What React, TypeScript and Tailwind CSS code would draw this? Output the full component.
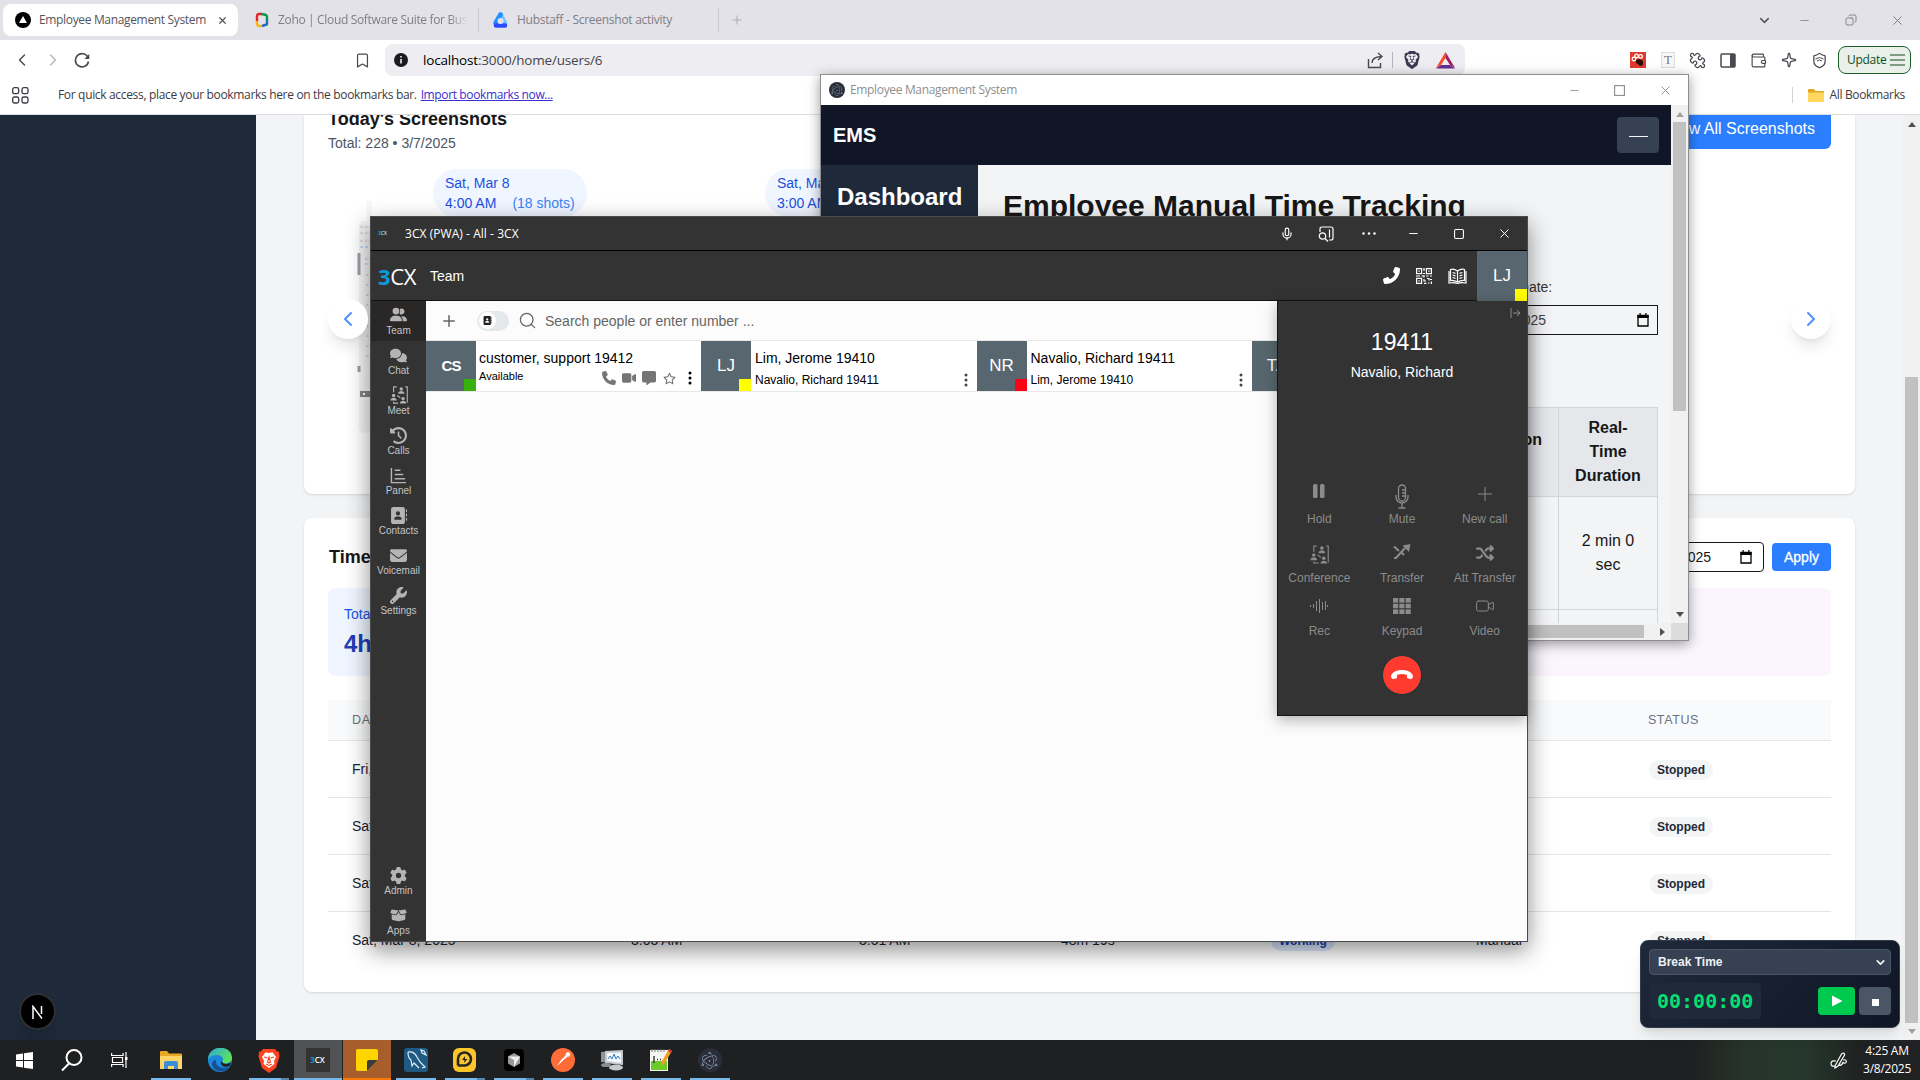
import React from "react";
import {
  Bookmark, ChevronDown, ChevronLeft, ChevronRight, Mic, Minus, Plus, Puzzle, Search, Sparkle, Wallet, X, Shield, Copy, Video,
} from "lucide-react";
import {
  FaUserGroup, FaComments, FaClockRotateLeft, FaAddressBook, FaEnvelope, FaWrench, FaGear, FaBoxOpen, FaPhone, FaVideo, FaMessage, FaRegStar, FaShuffle,
} from "react-icons/fa6";
import { SiBrave, SiElectron } from "react-icons/si";

const segoe = "font-['Open_Sans','Noto_Sans',sans-serif]";
const arial = "font-['Liberation_Sans',Arial,sans-serif]";

/* ---------- small drawings ---------- */

function MeetIcon({ size = 20 }: { size?: number }) {
  return (
    <svg width={size} height={size} viewBox="0 0 20 20" fill="currentColor">
      <circle cx="12.500" cy="3.200" r="1.900" />
      <path d="M9 8.600c0-4 7-4 7 0z" />
      <circle cx="4" cy="10.500" r="1.900" />
      <path d="M.5 16c0-4 7-4 7 0z" />
      <circle cx="14.500" cy="14" r="1.900" />
      <path d="M11 19.500c0-4 7-4 7 0z" />
      <path d="M7.500 1H4v6M17 1h2.200v17.500M4 17.500V19h5M8 10.500l3.500 2.500" fill="none" stroke="currentColor" strokeWidth="1.200" />
    </svg>
  );
}

function PanelIcon() {
  return (
    <svg width="17" height="17" viewBox="0 0 18 18" fill="none" stroke="currentColor" strokeWidth="1.500">
      <path d="M1.500 1v15.500H17M5 3.500h6M5 8h9M5 12.500h11" />
    </svg>
  );
}

function QrIcon() {
  return (
    <svg width="16" height="16" viewBox="0 0 16 16" fill="none" stroke="currentColor" strokeWidth="1.200">
      <path d="M.6.6h5v5h-5zM10.400.6h5v5h-5zM.6 10.400h5v5h-5z" />
      <path d="M2.400 3.100h1.400M12.200 3.100h1.400M2.400 12.900h1.400M8 0v3M7 5.500h2M8 7v2.500M0 8h4M5.500 8h2M10 8h2.500M14 8h2M8 11v2h2M8 15.400h2.500M11 10.500h2v2M14 11.500h2M12 15h1.500M15.400 13.500V16" />
    </svg>
  );
}

function Dots({ className = "" }: { className?: string }) {
  return (
    <svg width="4" height="14" viewBox="0 0 4 14" className={className} fill="currentColor">
      <circle cx="2" cy="2" r="1.500" /><circle cx="2" cy="7" r="1.500" /><circle cx="2" cy="12" r="1.500" />
    </svg>
  );
}

function Calendar() {
  return (
    <svg width="12" height="14" viewBox="0 0 12 14" className="text-black">
      <path d="M1 2.500h10v10.500H1z" fill="none" stroke="currentColor" strokeWidth="1.300" />
      <path d="M.4 2h11.200v3H.4zM2.500 0h1.200v2H2.500zM8.300 0h1.200v2H8.300z" fill="currentColor" />
    </svg>
  );
}

function Logo({ className = "" }: { className?: string }) {
  return (
    <span className={`flex items-center leading-none font-['Open_Sans',sans-serif] ${className}`}>
      <span className="font-bold text-[#0a9bdc]">3</span>
      <span className="text-white">CX</span>
    </span>
  );
}

function Arrow({ d, className = "" }: { d: string; className?: string }) {
  return (
    <svg width="8" height="5" viewBox="0 0 8 5" className={className}><path d={d} fill="currentColor" /></svg>
  );
}
const UP = "M0 5L4 0L8 5z";
const DOWN = "M0 0L4 5L8 0z";

/* ---------- browser ---------- */

function TabStrip() {
  return (
    <div className="flex h-10 items-center bg-[#e3e2e8] pl-[3px] text-[12px] text-[#7f7e85]">
      <div className="flex h-8 w-[235px] items-center rounded-lg bg-white pl-3 text-[#55545b]">
        <svg width="16" height="16" viewBox="0 0 16 16"><circle cx="8" cy="8" r="8" /><path d="M8 4l4 7H4z" fill="#fff" /></svg>
        <span className="ml-2 w-[167px] whitespace-nowrap tracking-[-0.34px]">Employee Management System</span>
        <X size={11} strokeWidth={2.600} className="ml-[11px]" />
      </div>
      <div className="flex h-6 w-[241px] items-center border-r border-[#c9c8ce] pl-4">
        <svg width="16" height="16" viewBox="0 0 16 16" fill="none" strokeWidth="2.400">
          <path d="M3 9V4q0-2 2-2h3" stroke="#e42527" /><path d="M8 2l4 1q1 .5 1 2v3" stroke="#089949" />
          <path d="M13 8v3q0 2-2 2l-3 1" stroke="#226db4" /><path d="M8 14H5q-2 0-2-2V9" stroke="#f9b21d" />
        </svg>
        <span className="ml-2 w-[190px] overflow-hidden whitespace-nowrap tracking-[-0.34px]" style={{ maskImage: "linear-gradient(90deg,#000 90%,transparent)" }}>
          Zoho | Cloud Software Suite for Business
        </span>
      </div>
      <div className="flex h-6 w-[240px] items-center border-r border-[#c9c8ce] pl-[13px]">
        <svg width="17" height="17" viewBox="0 0 17 17">
          <path d="M8.500 2.500L13 11" stroke="#6cc4ff" strokeWidth="4.500" strokeLinecap="round" fill="none" />
          <path d="M8.500 2.500L3.500 11" stroke="#1e90ff" strokeWidth="4.500" strokeLinecap="round" fill="none" />
          <path d="M4 13.500h9" stroke="#2b4bff" strokeWidth="4.500" strokeLinecap="round" /><circle cx="8.500" cy="9" r="3" fill="#e3e2e8" />
        </svg>
        <span className="ml-[8px] whitespace-nowrap tracking-[-0.27px]">Hubstaff - Screenshot activity</span>
      </div>
      <Plus size={14} strokeWidth={1.600} className="ml-[11px] text-[#aaa9af]" />
      <div className="ml-auto flex items-center pr-[15px] text-[#77767c]">
        <ChevronDown size={15} strokeWidth={2.400} className="text-[#55545b]" />
        <Minus size={13} strokeWidth={1.300} className="ml-[26px]" />
        <Copy size={12} strokeWidth={1.700} className="ml-[34px] -scale-x-100" />
        <X size={15} strokeWidth={1.500} className="ml-[33px]" />
      </div>
    </div>
  );
}

function Toolbar() {
  return (
    <div className="flex h-10 items-center bg-white text-[#4a4952]">
      <ChevronLeft size={20} strokeWidth={1.700} className="ml-[12px]" />
      <ChevronRight size={20} strokeWidth={1.500} className="ml-[11px] text-[#b3b2b8]" />
      <svg width="16" height="16" viewBox="0 0 16 16" className="ml-[11px]" fill="none" stroke="currentColor" strokeWidth="1.600"><path d="M14 5.500A6.600 6.600 0 1 0 14.500 9.500" /><path d="M15.300 2v5h-5z" fill="currentColor" stroke="none" /></svg>
      <Bookmark size={17} strokeWidth={1.700} className="ml-[264px]" />
      <div className="ml-[14px] flex h-8 w-[1080px] items-center rounded-lg bg-[#ededf2] pl-[9px]">
        <svg width="14" height="14" viewBox="0 0 14 14"><circle cx="7" cy="7" r="7" fill="#1c1b22" /><path d="M7 6v4.500M7 3v1.600" stroke="#fff" strokeWidth="1.500" /></svg>
        <span className="ml-[15px] text-[13.500px] tracking-[-0.18px] text-[#45444c]"><span className="text-black">localhost</span>:3000/home/users/6</span>
        <div className="ml-auto flex items-center pr-[10px]">
          <svg width="17" height="17" viewBox="0 0 17 17" fill="none" stroke="currentColor" strokeWidth="1.400"><path d="M1.500 7v8.500h12V11M5 11q0-6 9-6.500M11 1l4 3.500L11 8" /></svg>
          <span className="mx-[8px] h-4 w-px bg-[#b5b4bb]" />
          <SiBrave size={18} className="ml-[2px] text-[#3b3b52]" />
          <svg width="19" height="17" viewBox="0 0 19 17" className="ml-[15px]">
            <path d="M9.500 0L0 16l5-3 4.500-7z" fill="#ff4724" /><path d="M9.500 0L19 16l-5-3-4.500-7z" fill="#9e1f63" /><path d="M0 16.500h19l-5-3.500H5z" fill="#662d91" />
          </svg>
        </div>
      </div>
      <div className="ml-auto flex items-center pr-[9px]">
        <div className="flex size-4 items-center justify-center bg-[#dd3b2f]"><svg width="14" height="14" viewBox="0 0 14 14"><g fill="none" stroke="#fff" strokeWidth="1.300"><circle cx="3" cy="6" r="1.800" /><circle cx="5.500" cy="3" r="1.800" /><circle cx="9.500" cy="3.500" r="1.800" /></g><path d="M5 7l4-1 3 2v4l-3 1-2-2-2-1z" fill="#2b0a08" /></svg></div>
        <div className="ml-[15px] flex h-4 w-[14px] items-center justify-center border border-[#ddd] bg-[#f7f7f7] font-['Liberation_Serif',serif] text-[13px] text-[#777]">T</div>
        <Puzzle size={17} strokeWidth={1.800} className="ml-[14px] -scale-x-100" />
        <svg width="16" height="15" viewBox="0 0 16 15" className="ml-[14px]"><rect x="1" y="1" width="14" height="13" rx="1" fill="none" stroke="currentColor" strokeWidth="1.500" /><path d="M10 1h5v13h-5z" fill="currentColor" /></svg>
        <Wallet size={17} strokeWidth={1.600} className="ml-[14px]" />
        <Sparkle size={16} strokeWidth={1.900} className="ml-[14px]" />
        <div className="ml-[14px] flex size-[17px] items-center justify-center">
          <Shield size={17} strokeWidth={1.800} className="absolute" />
          <svg width="9" height="6" viewBox="0 0 9 6" className="relative" fill="none" stroke="currentColor"><path d="M.5 2q4-3 8 0M2 4q2.500-2 5 0" /></svg>
        </div>
        <div className="ml-[10px] flex h-7 w-[73px] items-center rounded-lg border border-[#1b5e28] bg-[#e9f0e9] pl-2 text-[12px] text-[#0e4d1c]">
          <span className="tracking-[-0.3px]">Update</span>
          <svg width="15" height="12" viewBox="0 0 15 12" className="ml-[4px]" stroke="currentColor" strokeWidth="1.200"><path d="M0 1h15M0 6h15M0 11h15" /></svg>
        </div>
      </div>
    </div>
  );
}

function BookmarksBar() {
  return (
    <div className="flex h-[35px] items-center border-b border-[#dedde2] bg-white pb-[4px] pl-[12px] text-[12px] text-[#3c3b42]">
      <svg width="17" height="17" viewBox="0 0 17 17" fill="none" stroke="currentColor" strokeWidth="1.300">
        <rect x=".7" y=".7" width="6" height="6" rx="1.800" /><rect x="10" y=".7" width="6" height="6" rx="1.800" /><rect x=".7" y="10" width="6" height="6" rx="1.800" /><rect x="10" y="10" width="6" height="6" rx="1.800" />
      </svg>
      <span className="ml-[29px] tracking-[-0.33px]">For quick access, place your bookmarks here on the bookmarks bar.</span>
      <span className="ml-[4px] tracking-[-0.37px] text-[#3a2fd0] underline">Import bookmarks now...</span>
      <div className="ml-auto flex items-center pr-[15px]">
        <span className="mr-[15px] h-4 w-px bg-[#d3d2d8]" />
        <svg width="16" height="13" viewBox="0 0 16 13"><path d="M0 1q0-1 1-1h5l1.500 2H16v11H0z" fill="#e0a826" /><path d="M0 3.500h16V13H0z" fill="#ffd75e" /></svg>
        <span className="ml-[6px] tracking-[-0.35px]">All Bookmarks</span>
      </div>
    </div>
  );
}

/* ---------- page in the browser ---------- */

const days = ["Fri, Mar 7, 2025", "Sat, Mar 8, 2025", "Sat, Mar 8, 2025", "Sat, Mar 8, 2025"];

function ShotPill({ time, count }: { time: string; count: string }) {
  return (
    <div className="h-[48px] w-[154px] rounded-full bg-[#eff6ff] px-3 pt-[4px] text-[14px] leading-5 text-[#1c4fe0]">
      <div>Sat, Mar 8</div>
      <div className="whitespace-pre">{time}<span className="ml-4 text-[#3b82f6]">{count}</span></div>
    </div>
  );
}

function RoundButton({ children }: { children: React.ReactNode }) {
  return <div className="z-10 flex size-10 items-center justify-center rounded-full bg-white text-[#5292fb] shadow-lg">{children}</div>;
}

function Thumbnails() {
  return (
    <svg width="16" height="236" viewBox="0 0 16 236" className="-ml-[12px]">
      <path d="M3 24q0-3 4-4h9v212h-6q-7 0-7-6z" fill="#f5f5f7" />
      <path d="M10 0h6v20h-5z" fill="#f7f7f8" />
      <path d="M4 26h12M4 32h12M4 40h3M9 40h2M13 40h2" stroke="#dcdce2" strokeWidth="2.500" strokeDasharray="3 1.500" />
      <path d="M4 46h12" stroke="#c3d7f5" strokeWidth="2" strokeDasharray="3 2" />
      <path d="M1.500 52h3v22h-3z" fill="#9a9ca3" />
      <path d="M9 58h7M9 63h7M10 74h6M10 84h6M10 94h6M10 104h6M10 115h6M10 125h6M10 135h6M10 145h6M10 155h6" stroke="#c9ccd4" strokeWidth="1.500" strokeDasharray="2.500 2" />
      <path d="M1.500 165h3v6h-3z" fill="#9a9ca3" />
      <path d="M4 190h12v6H4z" fill="#85868a" />
      <path d="M7 192h2v2H7z" fill="#fff" />
    </svg>
  );
}

function ScreenshotsCard() {
  return (
    <div className="h-[379px] rounded-b-lg bg-white px-6 shadow-sm">
      <div className="flex justify-between">
        <div className="-mt-[10px]">
          <div className="text-[18px] leading-7 font-bold text-[#171717]">Today's Screenshots</div>
          <div className="text-[14px] leading-5 text-[#4b5563]">Total: 228 • 3/7/2025</div>
        </div>
        <div className="h-[34px] rounded-b-md bg-[#2b7fff] px-4 pt-[2px] text-[16px] leading-6 text-white">View All Screenshots</div>
      </div>
      <div className="mt-[16px] flex gap-[178px] pl-[105px]">
        <ShotPill time="4:00 AM" count="(18 shots)" />
        <ShotPill time="3:00 AM" count="" />
      </div>
      <div className="-mt-[3px] flex h-[210px] items-center justify-between">
        <div className="flex items-center">
          <RoundButton><ChevronLeft size={24} strokeWidth={2} /></RoundButton>
          <Thumbnails />
        </div>
        <RoundButton><ChevronRight size={24} strokeWidth={2} /></RoundButton>
      </div>
    </div>
  );
}

function Cells({ first, last }: { first: string; last: boolean }) {
  return (
    <div className={`grid h-[57px] grid-cols-[279px_228px_202px_210px_205px_173px_1fr] items-center pl-6 text-[14px] text-[#1a2333] ${last ? "" : "border-b border-[#e3e5e8] pt-px"}`}>
      <span>{first}</span>
      <span>{last && "3:03 AM"}</span>
      <span>{last && "3:51 AM"}</span>
      <span>{last && "48m 19s"}</span>
      <span>{last && <span className="rounded-full bg-[#dbeafe] px-2 py-[3px] text-[12px] font-bold text-[#1e40af]">Working</span>}</span>
      <span>{last && "Manual"}</span>
      <span className="flex"><span className="rounded-full bg-[#f3f4f6] px-2 text-[12px] leading-5 font-bold text-[#1f2937]">Stopped</span></span>
    </div>
  );
}

function TimeCard() {
  return (
    <div className="mt-6 h-[474px] rounded-lg bg-white px-6 pt-6 shadow-sm">
      <div className="flex h-[30px] items-center">
        <span className="pl-px text-[18px] font-bold text-[#171717]">Time</span>
        <div className="ml-auto flex h-[30px] w-[140px] items-center justify-between rounded border border-[#171717] pr-[11px] pl-[16px] text-[14px] text-[#171717]">
          <span>03/08/2025</span><Calendar />
        </div>
        <div className="ml-2 flex h-7 w-[59px] items-center justify-center rounded bg-[#2b7fff] text-[14px] font-medium text-white [-webkit-text-stroke:0.3px_white]">Apply</div>
      </div>
      <div className="mt-4 grid h-[88px] grid-cols-3 gap-4">
        <div className="rounded-lg bg-[#eff6ff] px-4 pt-4">
          <div className="text-[14px] leading-5 text-[#2156e6]">Total</div>
          <div className="text-[24px] leading-10 font-bold text-[#1d3fb5]">4h</div>
        </div>
        <div />
        <div className="rounded-lg bg-[#faf5ff]" />
      </div>
      <div className="mt-6 flex h-[41px] items-center justify-between border-b border-[#e3e5e8] bg-[#f9fafb] pl-6 text-[12px] tracking-[0.6px] text-[#6b7280]">
        <span className="text-[12.500px]">DATE</span><span className="pr-[132px] text-[12.500px]">STATUS</span>
      </div>
      {days.map((d, i) => <Cells key={i} first={d} last={i === 3} />)}
    </div>
  );
}

function BrowserPage() {
  return (
    <div className={`flex h-[925px] overflow-hidden bg-[#f3f4f6] ${arial}`}>
      <div className="flex w-64 flex-col justify-end bg-[#1e2939] pb-[10px] pl-[19px]">
        <div className="flex size-[37px] items-center justify-center rounded-full border-2 border-[#2f3033] bg-black shadow-xl">
          <svg width="13" height="14" viewBox="0 0 13 14" fill="none" stroke="#fff" strokeWidth="1.500"><path d="M2 14V1.500l9 12M10.500 1v8" /></svg>
        </div>
      </div>
      <div className="w-[1647px] pr-12 pl-12"><ScreenshotsCard /><TimeCard /></div>
      <div className="flex flex-1 flex-col items-center bg-[#f1f1f1]">
        <Arrow d={UP} className="mt-[7px] text-[#505050]" />
        <div className="mt-[250px] h-[646px] w-[13px] bg-[#c1c1c1]" />
        <Arrow d={DOWN} className="mt-[6px] text-[#a0a0a0]" />
      </div>
    </div>
  );
}

/* ---------- EMS window ---------- */

function EmsWindow() {
  return (
    <div className={`absolute top-[74px] left-[820px] flex h-[567px] w-[869px] flex-col border border-[#8e8e90] bg-white shadow-[0_3px_12px_rgba(0,0,0,0.4)] ${arial}`}>
      <div className={`flex h-[30px] items-center bg-white pl-2 text-[12px] text-[#8f8f8f] ${segoe}`}>
        <div className="flex size-4 items-center justify-center rounded-full bg-[#2b2e3a]"><SiElectron size={12} className="text-[#9fbfc6]" /></div>
        <span className="ml-[5px] tracking-[-0.34px]">Employee Management System</span>
        <div className="ml-auto flex items-center pr-[15px] text-[#8a8a8a]">
          <Minus size={13} strokeWidth={1.500} />
          <svg width="11" height="11" viewBox="0 0 11 11" className="ml-[33px]"><rect x=".6" y=".6" width="9.800" height="9.800" fill="none" stroke="currentColor" strokeWidth="1.100" /></svg>
          <X size={15} strokeWidth={1.500} className="ml-[33px]" />
        </div>
      </div>
      <div className="flex flex-1">
        <div className="flex w-[850px] flex-col">
          <div className="flex h-[60px] items-center justify-between bg-[#101626] pr-3 pl-3 text-[20px] font-bold text-white">
            <span>EMS</span>
            <div className="flex h-9 w-[42px] items-center justify-center rounded bg-[#364153]"><span className="mt-[3px] h-[1.500px] w-[19px] bg-[#f3f4f6]" /></div>
          </div>
          <div className="flex h-[458px] overflow-hidden bg-[#f3f4f6]">
            <div className="w-[157px] bg-[#1e2939] pt-4 pl-4 text-[24px] leading-8 font-bold text-white">Dashboard</div>
            <div className="flex w-[693px] flex-col items-end pr-[13px]">
              <div className="mt-[23px] w-[655px] shrink-0 text-[30px] leading-9 font-bold whitespace-nowrap text-[#171717]">Employee Manual Time Tracking</div>
              <div className="mt-[53px] w-[170px] shrink-0 pl-[2px] text-[14px] leading-5 text-[#333]">End Date:</div>
              <div className="mt-[8px] flex h-[30px] w-[170px] shrink-0 items-center justify-between border border-[#171717] pr-2 text-[14px] text-[#444]"><span className="-ml-[13px]">03/08/2025</span><Calendar /></div>
              <div className="mt-[72px] grid w-[240px] shrink-0 grid-cols-[1fr_99px] border-t border-r border-[#d1d5db] text-center text-[16px] leading-6 text-[#171717]">
                <div className="flex h-[89px] flex-col items-end justify-center border-b border-[#d1d5db] bg-[#e5e7eb] pr-4 font-bold"><span>Duration</span><span className="pr-[15px]">(h)</span></div>
                <div className="flex h-[89px] flex-col justify-center border-b border-l border-[#d1d5db] bg-[#e5e7eb] font-bold"><span>Real-</span><span>Time</span><span>Duration</span></div>
                <div className="h-[113px] border-b border-[#d1d5db]" />
                <div className="flex h-[113px] flex-col justify-center border-b border-l border-[#d1d5db]"><span>2 min 0</span><span>sec</span></div>
                <div className="h-5" />
                <div className="h-5 border-l border-[#d1d5db]" />
              </div>
            </div>
          </div>
          <div className="flex h-[17px] items-center justify-end bg-[#f1f1f1]">
            <div className="h-[13px] w-[500px] bg-[#c1c1c1]" />
            <svg width="5" height="8" viewBox="0 0 5 8" className="mr-[6px] ml-[16px]"><path d="M0 0l5 4-5 4z" fill="#505050" /></svg>
          </div>
        </div>
        <div className="flex w-[17px] flex-col items-center bg-[#f1f1f1]">
          <Arrow d={UP} className="mt-[7px] text-[#a3a3a3]" />
          <div className="mt-[5px] h-[289px] w-[13px] bg-[#c1c1c1]" />
          <Arrow d={DOWN} className="mt-auto mb-[6px] text-[#505050]" />
          <div className="h-[17px] w-full bg-[#dcdcdc]" />
        </div>
      </div>
    </div>
  );
}

/* ---------- 3CX window ---------- */

function NavItem({ icon, label, active = false }: { icon: React.ReactNode; label: string; active?: boolean }) {
  return (
    <div className={`flex h-10 flex-col items-center text-[#b4b4b4] ${active ? "bg-[#2a2727]" : ""}`}>
      <div className="flex h-[28px] items-center">{icon}</div>
      <div className="-mt-[4px] text-[10px] leading-3 text-[#c4c4c4]">{label}</div>
    </div>
  );
}

function Avatar({ initials, color, bold = false }: { initials: string; color: string; bold?: boolean }) {
  return (
    <div className="relative flex size-[50px] shrink-0 items-center justify-center bg-[#58676f] text-white">
      <span className={bold ? "text-[15px] font-bold tracking-[-1px]" : "text-[17px]"}>{initials}</span>
      {color && <span className={`absolute right-0 bottom-0 size-3 ${color}`} />}
    </div>
  );
}

function Person({ initials, color, name, detail }: { initials: string; color: string; name: string; detail: string }) {
  return (
    <div className="flex w-[275.500px] shrink-0">
      <Avatar initials={initials} color={color} />
      <div className="flex-1 pt-[7px] pl-[4px] text-black">
        <div className="text-[14px] leading-5">{name}</div>
        <div className="mt-[2px] flex items-center text-[12px] leading-5"><span>{detail}</span><Dots className="mr-[9px] ml-auto text-[#444]" /></div>
      </div>
    </div>
  );
}

function Action({ icon, label }: { icon: React.ReactNode; label: string }) {
  return (
    <div className="flex flex-col items-center">
      <div className="flex h-[26px] items-center">{icon}</div>
      <div className="mt-[3px] text-[12px] leading-4">{label}</div>
    </div>
  );
}

function CallPanel() {
  return (
    <div className="absolute top-0 right-0 flex h-[415px] w-[250px] flex-col items-center border-b border-l border-[#151515] bg-[#333] pr-px text-[#8b8b8b] shadow-[0_4px_14px_rgba(0,0,0,0.3)]">
      <svg width="11" height="10" viewBox="0 0 11 10" className="mt-[7px] mr-[5px] self-end" fill="none" stroke="currentColor"><path d="M1 0v10M3 5h7M7 2l3 3-3 3" /></svg>
      <div className="mt-[10px] text-[23px] leading-7 text-white">19411</div>
      <div className="mt-[6px] text-[14px] leading-5 text-white">Navalio, Richard</div>
      <div className="mt-[100px] grid w-full grid-cols-3">
        <Action label="Hold" icon={<svg width="12" height="15" viewBox="0 0 12 15" className="-mt-[8px]" fill="currentColor"><rect width="4.500" height="14" rx="1.500" /><rect x="7" width="4.500" height="14" rx="1.500" /></svg>} />
        <Action label="Mute" icon={<svg width="14" height="25" viewBox="0 0 14 25" className="mt-[2px]" fill="none" stroke="currentColor" strokeWidth="1.300"><rect x="3.500" y="1" width="7" height="16" rx="3.500" /><path d="M1 11v2a6 6 0 0 0 12 0v-2M7 19.500V24M3.500 24h7M7 6h3.500M7 9h3.500M7 12h3.500" /></svg>} />
        <Action label="New call" icon={<svg width="14" height="14" viewBox="0 0 14 14" className="-mt-[2px]" stroke="currentColor"><path d="M7 0v14M0 7h14" /></svg>} />
      </div>
      <div className="mt-[14px] grid w-full grid-cols-3">
        <Action label="Conference" icon={<MeetIcon size={19} />} />
        <Action label="Transfer" icon={<svg width="18" height="17" viewBox="0 0 18 17" className="-mt-[5px]" fill="none" stroke="currentColor" strokeWidth="2.200"><path d="M1 15h2l9-10M1 3.500l5 4.500M9 10l2 2" /><path d="M9.500 2.500L17.500 1l-1.500 8z" fill="currentColor" stroke="none" /></svg>} />
        <Action label="Att Transfer" icon={<FaShuffle size={18} className="-mt-[3px]" />} />
      </div>
      <div className="mt-[8px] grid w-full grid-cols-3">
        <Action label="Rec" icon={<svg width="18" height="16" viewBox="0 0 18 16" className="-mt-[3px]" stroke="currentColor"><path d="M.5 7v2M3.500 6v4M6.500 3v10M9.500 1v14M12.500 4v8M15.500 3v9M17.500 7v2" /></svg>} />
        <Action label="Keypad" icon={<svg width="18" height="16" viewBox="0 0 18 16" className="-mt-[3px]" fill="currentColor">{[0, 6.3, 12.6].map((x) => [0, 5.7, 11.4].map((y) => <rect key={`${x}-${y}`} x={x} y={y} width="5.200" height="4.600" />))}</svg>} />
        <Action label="Video" icon={<Video size={20} strokeWidth={1.200} className="-mt-[3px]" />} />
      </div>
      <div className="mt-[16px] flex size-10 items-center justify-center rounded-full border border-[#12383a] bg-[#ff3b30]">
        <svg width="22" height="10" viewBox="0 0 22 10"><path d="M0 6C2-2 20-2 22 6l-.5 2q-.5 1-1.500 1l-3-.5q-1-.2-1-1.500V5Q11 3 6 5v2q0 1.300-1 1.500L2 9Q1 9 .5 8z" fill="#fff" /></svg>
      </div>
    </div>
  );
}

function PhoneWindow() {
  return (
    <div className={`absolute top-[216px] left-[370px] flex h-[726px] w-[1158px] flex-col border border-[#4b4b4b] bg-[#333] shadow-[0_8px_22px_rgba(0,0,0,0.45)] ${arial}`}>
      <div className={`flex h-[34px] items-center border-b border-black text-white ${segoe}`}>
        <Logo className="ml-[7px] w-4 text-[5px]" />
        <span className="ml-[11px] text-[12px] tracking-[0.05px]">3CX (PWA) - All - 3CX</span>
        <div className="ml-auto flex items-center pr-[15px]">
          <Mic size={14} strokeWidth={2} />
          <svg width="16" height="16" viewBox="0 0 16 16" className="ml-[24px]" fill="none" stroke="currentColor" strokeWidth="1.200"><path d="M2 6V3q0-2 2-2h9q2 0 2 2v9q0 2-2 2h-2M11.500 3.500v8" /><circle cx="4.500" cy="10" r="3.200" /><path d="M7 12.500l3 3" /></svg>
          <svg width="14" height="3" viewBox="0 0 14 3" className="ml-[28px]" fill="currentColor"><circle cx="1.500" cy="1.500" r="1.200" /><circle cx="7" cy="1.500" r="1.200" /><circle cx="12.500" cy="1.500" r="1.200" /></svg>
          <Minus size={13} strokeWidth={1.800} className="ml-[31px]" />
          <svg width="10" height="10" viewBox="0 0 11 11" className="ml-[34px]"><rect x=".6" y=".6" width="9.800" height="9.800" rx="1.500" fill="none" stroke="currentColor" strokeWidth="1.200" /></svg>
          <X size={15} strokeWidth={1.600} className="ml-[33px]" />
        </div>
      </div>
      <div className="flex h-[50px] items-center border-b border-[#141414] pl-[7px] text-white">
        <Logo className="w-[43px] text-[22px] tracking-[-0.4px]" />
        <span className="ml-[9px] pt-px text-[14px]">Team</span>
        <div className="ml-auto flex items-center">
          <FaPhone size={17} className="-scale-x-100" />
          <span className="ml-[16px]"><QrIcon /></span>
          <svg width="19" height="16" viewBox="0 0 19 16" className="mr-[10px] ml-[16px]" fill="none" stroke="currentColor" strokeWidth="1.200"><path d="M9.500 3Q6 .5 2.500 1.500v11Q6 12 9.500 14 13 12 16.500 12.500v-11Q13 .5 9.500 3zV14M1 3v12q5-1 8.500.5Q13 14 18 15V3M4.500 4.500l3 .8M4.500 7l3 .8M4.500 9.500l3 .8M14.500 4.500l-3 .8M14.500 7l-3 .8M14.500 9.500l-3 .8" /></svg>
          <Avatar initials="LJ" color="bg-[#ffff00]" />
        </div>
      </div>
      <div className="relative flex flex-1">
        <div className="flex w-[55px] flex-col">
          <NavItem active label="Team" icon={<FaUserGroup size={17} className="-mt-px" />} />
          <NavItem label="Chat" icon={<FaComments size={17} />} />
          <NavItem label="Meet" icon={<MeetIcon size={18} />} />
          <NavItem label="Calls" icon={<FaClockRotateLeft size={17} />} />
          <NavItem label="Panel" icon={<PanelIcon />} />
          <NavItem label="Contacts" icon={<FaAddressBook size={17} />} />
          <NavItem label="Voicemail" icon={<FaEnvelope size={17} />} />
          <NavItem label="Settings" icon={<FaWrench size={17} />} />
          <div className="mt-auto">
            <NavItem label="Admin" icon={<FaGear size={17} />} />
            <NavItem label="Apps" icon={<FaBoxOpen size={17} />} />
          </div>
        </div>
        <div className="flex-1 overflow-hidden bg-[#fcfcfc]">
          <div className="flex h-10 items-center border-b border-[#e8e8e8] text-[#666]">
            <Plus size={18} strokeWidth={2} className="ml-[14px]" />
            <div className="ml-[19px] flex h-5 w-8 items-center rounded-full bg-[#e3e8eb] pl-[2px]">
              <div className="flex size-[17px] items-center justify-center rounded-full bg-white"><FaAddressBook size={9} className="text-[#222]" /></div>
            </div>
            <Search size={19} strokeWidth={1.600} className="ml-[9px]" />
            <span className="ml-[8px] pt-px text-[14px]">Search people or enter number ...</span>
          </div>
          <div className="flex h-[51px] border-b border-[#e8e8e8] bg-white">
            <div className="flex w-[275px] shrink-0">
              <Avatar initials="CS" color="bg-[#37b10e]" bold />
              <div className="flex-1 pt-[7px] pl-[3px] text-black">
                <div className="text-[14px] leading-5">customer, support 19412</div>
                <div className="flex text-[11px] leading-4">
                  <span>Available</span>
                  <div className="mt-[3px] mr-[9px] ml-auto flex items-center text-[#757575]">
                    <FaPhone size={14} /><FaVideo size={14} className="ml-[6px]" /><FaMessage size={14} className="ml-[6px]" /><FaRegStar size={13} className="ml-[7px]" />
                    <Dots className="ml-[12px] text-black" />
                  </div>
                </div>
              </div>
            </div>
            <Person initials="LJ" color="bg-[#ffff00]" name="Lim, Jerome 19410" detail="Navalio, Richard 19411" />
            <Person initials="NR" color="bg-[#ff0016]" name="Navalio, Richard 19411" detail="Lim, Jerome 19410" />
            <Avatar initials="TA" color="" />
          </div>
        </div>
        <CallPanel />
      </div>
    </div>
  );
}

/* ---------- timer widget ---------- */

function TimerWidget() {
  return (
    <div className={`absolute top-[940px] left-[1640px] flex h-[88px] w-[260px] flex-col gap-2 rounded-lg border border-[#303b4b] bg-[linear-gradient(135deg,#1e2939,#101626)] p-2 shadow-lg ${arial}`}>
      <div className="flex h-[26px] items-center justify-between rounded border border-[#4a5565] bg-[#364153] px-[8px] text-[12px] font-bold text-[#eef0f3]">
        <span>Break Time</span><ChevronDown size={13} strokeWidth={3.200} className="-mr-[5px]" />
      </div>
      <div className="flex items-center">
        <div className="flex h-9 w-[112px] items-center rounded bg-[#1e2939] pl-2 font-['DejaVu_Sans_Mono',monospace] text-[20px] font-bold text-[#05df72]">00:00:00</div>
        <div className="ml-auto flex h-7 w-[37px] items-center justify-center rounded bg-[#00c950]"><svg width="12" height="12" viewBox="0 0 12 12"><path d="M1 .5l10.500 5.500L1 11.500z" fill="#fff" /></svg></div>
        <div className="ml-1 flex h-7 w-8 items-center justify-center rounded bg-[#4a5565]"><span className="mt-[3px] size-[7px] bg-white" /></div>
      </div>
    </div>
  );
}

/* ---------- taskbar ---------- */

function Task({ children, state = "open" }: { children: React.ReactNode; state?: "open" | "multi" | "active" | "alert" | "none" }) {
  const bg = state === "active" ? "bg-[#515254]" : state === "alert" ? "bg-[#a75e2a]" : "";
  const bar = state === "active" ? "w-12 bg-[#76b9ed]" : state === "alert" ? "w-12 bg-[#ff7a00]" : state === "none" ? "w-0" : "w-10 bg-[#76b9ed]";
  return (
    <div className="flex w-[49px] justify-center">
      <div className={`flex h-10 w-12 flex-col items-center ${bg}`}>
        <div className="flex h-[38px] items-center justify-center pt-[2px]">{children}</div>
        <div className={`flex h-[2px] justify-end ${bar}`}>{state === "multi" && <span className="w-2 bg-[#5685ab]" />}</div>
      </div>
    </div>
  );
}

function Taskbar() {
  return (
    <div className="flex h-10 items-center bg-[linear-gradient(90deg,#1f2022_0%,#1f2021_88%,#26352b_91%,#25372c_94%,#202122_97%)] pl-4 text-white">
      <svg width="17" height="17" viewBox="0 0 17 17" fill="#fff"><path d="M0 2.500l7-1V8H0zM8 1.300L17 0v8H8zM0 9h7v6.500l-7-1zM8 9h9v8l-9-1.300z" /></svg>
      <svg width="24" height="24" viewBox="0 0 24 24" className="ml-[27px]" fill="none" stroke="#fff" strokeWidth="2"><circle cx="14" cy="9.500" r="7.500" /><path d="M9 15.500L2 22.500" /></svg>
      <svg width="17" height="16" viewBox="0 0 17 16" className="ml-[27px]" fill="none" stroke="#fff" strokeWidth="1.200"><path d="M.6 1v2.500h11.500V1M1.500 5.500h10v5h-10zM.6 15v-2.500h11.500V15M15 0v16" /><rect x="14" y="5" width="2.500" height="3" fill="#fff" stroke="none" /></svg>
      <div className="ml-[18px] flex">
        <Task><svg width="22" height="19" viewBox="0 0 22 19"><path d="M0 1q0-1 1-1h6l2 2.500h12q1 0 1 1V17H0z" fill="#e8a823" /><path d="M0 5h22v13H0z" fill="#ffd667" /><path d="M4 18v-6q0-2 2-2h10q2 0 2 2v6h-4v-3H8v3z" fill="#3a8fd8" /></svg></Task>
        <Task state="none">
          <svg width="24" height="24" viewBox="0 0 24 24"><defs><linearGradient id="edge" x1="0" y1="0" x2="1" y2="0.600"><stop offset="0" stopColor="#2aa8dc" /><stop offset="1" stopColor="#5ee35a" /></linearGradient></defs>
            <circle cx="12" cy="12" r="12" fill="#1c86d8" /><path d="M0 12C0-4 24-4 24 10c0 5-7 7-10 4 3-4-1-7-5-7-5 0-9 3-9 5z" fill="url(#edge)" /><path d="M8 12c-1 6 5 10 13 7-5 7-16 5-17-3 0-2 2-4 4-4z" fill="#164f95" /><path d="M14 14c2 3 7 2 9 0l-1 4c-5 2-10 0-9-5z" fill="#1f2022" /></svg>
        </Task>
        <Task state="multi">
          <svg width="22" height="25" viewBox="0 0 22 25"><path d="M5 1h12l2 2.500 2 0 .5 5L18 20l-7 5-7-5L.5 8.500l.5-5h2z" fill="#fb4320" /><path d="M11 5l3.500-.8L18 9l-2 4 .5 3-5.500 4-5.500-4L6 13 4 9l3.500-4.800z" fill="#fff" /><path d="M6 9l3.500 1M16 9l-3.500 1M11 9l-1.500 5 1.500 1 1.500-1zM8 16l3 1.500 3-1.500" stroke="#fb4320" strokeWidth="1.100" fill="none" /></svg>
        </Task>
        <Task state="active"><div className="flex size-6 items-center justify-center bg-[#333]"><Logo className="text-[8px] font-semibold" /></div></Task>
        <Task state="alert"><svg width="22" height="22" viewBox="0 0 22 22"><path d="M2 0h18q2 0 2 2v9L11 22H2q-2 0-2-2V2q0-2 2-2z" fill="#ffd500" /><path d="M11 22v-9q0-2 2-2h9z" fill="#3b3b3b" /></svg></Task>
        <Task><svg width="24" height="24" viewBox="0 0 24 24"><rect width="24" height="24" rx="3" fill="#1f5a85" /><path d="M4 4q6-1 9 5l3 5 5 5-3 1M4 4q0 6 3 8l1 6 2-3 5 5M17 2l1 3 4 2-2-4z" fill="none" stroke="#e5eef5" strokeWidth="1.200" /></svg></Task>
        <Task state="multi"><svg width="23" height="24" viewBox="0 0 23 24"><rect width="23" height="24" rx="6" fill="#fcc62b" /><path d="M5 17.500V11.500a6.500 6.500 0 1 1 6.500 6H5" fill="none" stroke="#272727" strokeWidth="2.600" /><path d="M12 8l-3 4h2.500L11 15l3.500-4H12z" fill="#272727" /></svg></Task>
        <Task state="multi"><svg width="20" height="22" viewBox="0 0 20 22"><rect width="20" height="22" rx="4" fill="#000" /><path d="M10 4l6 3.500v7L10 18l-6-3.500v-7z" fill="#999" /><path d="M4 7.500h12L10 18v-7z" fill="#eee" /></svg></Task>
        <Task><svg width="24" height="24" viewBox="0 0 24 24"><circle cx="12" cy="12" r="12" fill="#ff6c37" /><path d="M6 18l4-6 5-5q2-1 2 1l-5 5z" fill="#fff" /><circle cx="17" cy="6.500" r="2.200" fill="#fff" /><path d="M7 18l7-7" stroke="#ff6c37" /></svg></Task>
        <Task><svg width="24" height="22" viewBox="0 0 24 22"><path d="M1 3L15 2v12L1 13z" fill="#8d9499" /><path d="M5 2l18-1v15L5 14z" fill="#c3cacf" /><path d="M7 4l14-.5v10.500L7 12z" fill="#f2f8fc" /><path d="M8 10l2-3 2 3 2-5 2 5 2-3 2 3" stroke="#2c7cc0" fill="none" /><ellipse cx="16" cy="18.500" rx="7" ry="3" fill="#c4c9cd" /><ellipse cx="6" cy="16" rx="5" ry="2" fill="#8a8f93" /></svg></Task>
        <Task><svg width="23" height="25" viewBox="0 0 23 25"><path d="M1 2h18v21H1z" fill="#f4f4f0" /><path d="M2 13h16v9H2z" fill="#6ccb28" /><path d="M3 1v3M6 1v3M9 1v3M12 1v3M15 1v3" stroke="#777" /><path d="M5 8v7M8 11.500h1M11 11.500h1" stroke="#333" strokeWidth="1.400" /><path d="M20 1l3 2-8 13-3 2 .5-4z" fill="#f0a020" /><path d="M20 1l3 2-1 2-3-2z" fill="#d33" /></svg></Task>
        <Task><div className="flex size-6 items-center justify-center rounded-full bg-[#2b2e3a]"><SiElectron size={17} className="text-[#a9cdd8]" /></div></Task>
      </div>
      <div className={`ml-auto flex items-center pr-[9px] text-[12px] leading-[18px] ${segoe}`}>
        <svg width="17" height="17" viewBox="0 0 17 17" fill="none" stroke="#fff" strokeWidth="1.200"><path d="M5 14L11.500 2q2-2 3 0 .3 1-.5 2L8 14l-3 2zM6 9Q1 8 1 11.500 1 15 5 14M13 8q4-1 3 2.500-1 1.500-3 0-1 3-4 3" /></svg>
        <div className="ml-[16px] text-center tracking-[-0.25px]"><div>4:25 AM</div><div>3/8/2025</div></div>
      </div>
    </div>
  );
}

export default function App() {
  return (
    <div className={`relative h-[1080px] w-[1920px] overflow-hidden ${segoe}`}>
      <TabStrip />
      <Toolbar />
      <BookmarksBar />
      <BrowserPage />
      <Taskbar />
      <EmsWindow />
      <PhoneWindow />
      <TimerWidget />
    </div>
  );
}
